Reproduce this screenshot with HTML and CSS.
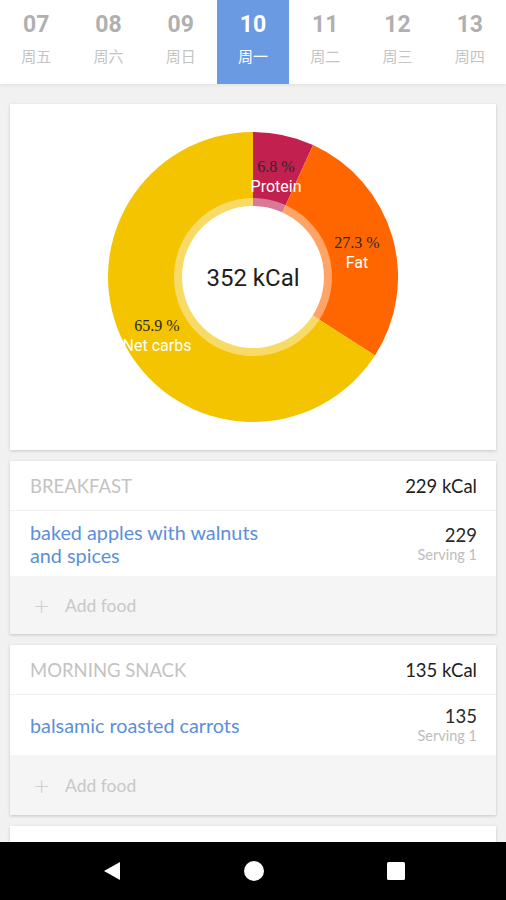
FILE: index.html
```html
<!DOCTYPE html>
<html lang="en">
<head>
    <meta charset="UTF-8">
    <meta name="viewport" content="width=device-width, initial-scale=1.0">
    <title>Food Diary</title>
    <link rel="stylesheet" href="styles.css">
</head>
<body>

<!-- Week day selector -->
<div class="days">
    <div class="day"><span class="num">07</span><span class="wd">周五</span></div>
    <div class="day"><span class="num">08</span><span class="wd">周六</span></div>
    <div class="day"><span class="num">09</span><span class="wd">周日</span></div>
    <div class="day active"><span class="num">10</span><span class="wd">周一</span></div>
    <div class="day"><span class="num">11</span><span class="wd">周二</span></div>
    <div class="day"><span class="num">12</span><span class="wd">周三</span></div>
    <div class="day"><span class="num">13</span><span class="wd">周四</span></div>
</div>

<div class="content">
    <!-- Macro chart -->
    <div class="card chart-card">
        <svg class="donut" width="290" height="290" viewBox="0 0 290 290">
            <path d="M145 145 L145 0 A145 145 0 0 1 205.09 13.04 Z" fill="#c2204f"/>
            <path d="M145 145 L205.09 13.04 A145 145 0 0 1 266.95 223.46 Z" fill="#ff6600"/>
            <path d="M145 145 L266.95 223.46 A145 145 0 1 1 145 0 Z" fill="#f4c400"/>
            <circle cx="145" cy="145" r="79" fill="#ffffff" fill-opacity="0.4"/>
            <circle cx="145" cy="145" r="71" fill="#ffffff"/>
            <text class="pct" x="168" y="34">6.8 %</text>
            <text class="lbl" x="168" y="54">Protein</text>
            <text class="pct" x="249" y="110">27.3 %</text>
            <text class="lbl" x="249" y="130">Fat</text>
            <text class="pct" x="49" y="193">65.9 %</text>
            <text class="lbl" x="49" y="213">Net carbs</text>
            <text class="total" x="145" y="146">352 kCal</text>
        </svg>
    </div>

    <!-- Breakfast -->
    <div class="card meal">
        <div class="meal-head">
            <span class="meal-name">BREAKFAST</span>
            <span class="meal-kcal">229 kCal</span>
        </div>
        <div class="food">
            <span class="food-name">baked apples with walnuts<br>and spices</span>
            <div class="food-info">
                <span class="food-kcal">229</span>
                <span class="food-serv">Serving 1</span>
            </div>
        </div>
        <div class="add-food"><span class="plus">+</span>Add food</div>
    </div>

    <!-- Morning snack -->
    <div class="card meal">
        <div class="meal-head">
            <span class="meal-name">MORNING SNACK</span>
            <span class="meal-kcal">135 kCal</span>
        </div>
        <div class="food single">
            <span class="food-name">balsamic roasted carrots</span>
            <div class="food-info">
                <span class="food-kcal">135</span>
                <span class="food-serv">Serving 1</span>
            </div>
        </div>
        <div class="add-food tall"><span class="plus">+</span>Add food</div>
    </div>

    <div class="card meal">
        <div class="meal-head">
            <span class="meal-name">LUNCH</span>
            <span class="meal-kcal">0 kCal</span>
        </div>
    </div>
</div>

<!-- Android navigation bar -->
<div class="navbar">
    <svg width="18" height="20" viewBox="0 0 18 20"><path d="M17 1 L17 19 L1 10 Z" fill="#fff"/></svg>
    <svg width="20" height="20" viewBox="0 0 20 20"><circle cx="10" cy="10" r="10" fill="#fff"/></svg>
    <svg width="20" height="20" viewBox="0 0 20 20"><rect x="1" y="1" width="18" height="18" rx="1.5" fill="#fff"/></svg>
</div>

</body>
</html>
```

FILE: styles.css
```css
body {
    margin: 0;
    height: 900px;
    overflow: hidden;
    background-color: #f1f1f1;
    font-family: Lato, "Open Sans", sans-serif;
}

.days {
    display: flex;
    height: 84px;
    background-color: #fff;
    box-shadow: 0 1px 3px rgba(0, 0, 0, 0.08);
    position: relative;
}

.day {
    flex: 1;
    display: flex;
    flex-direction: column;
    align-items: center;
}

.day .num {
    font-family: Roboto, sans-serif;
    font-weight: bold;
    font-size: 23px;
    color: #b0b0b0;
    margin-top: 11px;
    line-height: 28px;
}

.day .wd {
    font-family: "Noto Sans CJK SC", sans-serif;
    font-size: 15px;
    color: #c4c4c4;
    margin-top: 7px;
    line-height: 20px;
}

.day.active {
    background-color: #6a9be2;
}

.day.active .num,
.day.active .wd {
    color: #fff;
}

.content {
    padding: 20px 10px 0 10px;
    display: flex;
    flex-direction: column;
    gap: 11px;
}

.card {
    background-color: #fff;
    box-shadow: 0 1px 3px rgba(0, 0, 0, 0.18);
}

.chart-card {
    height: 346px;
    display: flex;
    align-items: center;
    justify-content: center;
}

.donut text {
    text-anchor: middle;
    dominant-baseline: central;
}

.donut .pct {
    font-family: "Liberation Serif", serif;
    font-size: 16px;
    fill: #2a2a2a;
}

.donut .lbl {
    font-family: Roboto, sans-serif;
    font-size: 16px;
    fill: #fff;
}

.donut .total {
    font-family: Roboto, sans-serif;
    font-size: 24px;
    fill: #1e1e1e;
}

.meal-head {
    height: 49px;
    display: flex;
    justify-content: space-between;
    align-items: center;
    padding: 0 19px 0 20px;
    border-bottom: 1px solid #f0f0f0;
    font-size: 18.5px;
}

.meal-name {
    color: #c3c3c3;
}

.meal-kcal {
    color: #1e1e1e;
}

.food {
    height: 65px;
    display: flex;
    justify-content: space-between;
    align-items: center;
    padding: 0 19px 0 20px;
}

.food.single {
    height: 60px;
}

.food-name {
    color: #5b8fd9;
    font-size: 19.8px;
    line-height: 23px;
}

.food-info {
    display: flex;
    flex-direction: column;
    align-items: flex-end;
}

.food-kcal {
    font-size: 18.5px;
    color: #2a2a2a;
    line-height: 21px;
}

.food-serv {
    font-size: 14.5px;
    color: #bdbdbd;
    line-height: 17px;
}

.add-food {
    height: 58px;
    background-color: #f5f5f5;
    display: flex;
    align-items: center;
    padding-left: 24px;
    font-size: 17.5px;
    color: #c8c8c8;
}

.add-food.tall {
    height: 60px;
}

.plus {
    font-size: 26px;
    font-weight: 300;
    width: 41px;
    margin-right: -10px;
    color: #cfcfcf;
}

.navbar {
    position: fixed;
    left: 0;
    right: 0;
    bottom: 0;
    height: 58px;
    background-color: #000;
    display: flex;
    justify-content: space-between;
    align-items: center;
    padding: 0 100px 0 103px;
}
```
